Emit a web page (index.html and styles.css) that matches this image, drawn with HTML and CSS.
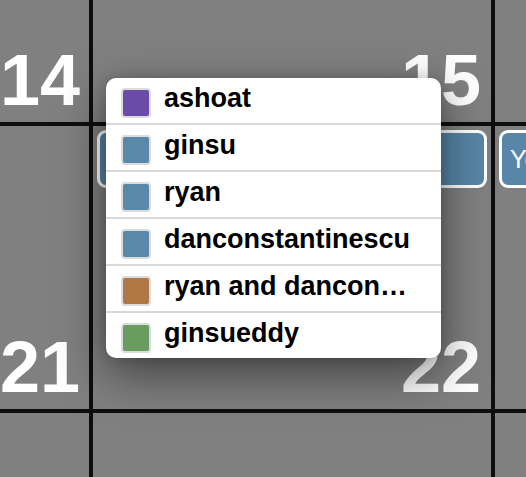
FILE: index.html
```html
<!DOCTYPE html>
<html>
<head>
<meta charset="utf-8">
<link rel="stylesheet" href="styles.css">
</head>
<body>
<div class="calendar">
  <div class="cell"><span class="day">14</span></div>
  <div class="cell"><span class="day">15</span></div>
  <div class="cell"></div>
  <div class="cell"><span class="day">21</span></div>
  <div class="cell">
    <div class="event"></div>
    <span class="day">22</span>
  </div>
  <div class="cell">
    <div class="event"><span class="event-label">Yo</span></div>
  </div>
  <div class="cell"></div>
  <div class="cell"></div>
  <div class="cell"></div>
</div>

<div class="popup">
  <div class="row"><span class="swatch purple"></span><span class="name">ashoat</span></div>
  <div class="row"><span class="swatch blue"></span><span class="name">ginsu</span></div>
  <div class="row"><span class="swatch blue"></span><span class="name">ryan</span></div>
  <div class="row"><span class="swatch blue"></span><span class="name">danconstantinescu</span></div>
  <div class="row"><span class="swatch brown"></span><span class="name">ryan and dancon…</span></div>
  <div class="row"><span class="swatch green"></span><span class="name">ginsueddy</span></div>
</div>
</body>
</html>
```
FILE: styles.css
```css
html, body {
  margin: 0;
  padding: 0;
}
body {
  width: 526px;
  height: 477px;
  overflow: hidden;
  background: #808080;
  position: relative;
  font-family: "Liberation Sans", Arial, sans-serif;
}
.calendar {
  display: grid;
  grid-template-columns: 89px 398px 398px;
  grid-template-rows: 122px 283px 283px;
  gap: 4px;
  background: #0e0e0e;
  width: 893px;
}
.cell {
  background: #808080;
  display: flex;
  flex-direction: column;
  justify-content: flex-end;
  align-items: stretch;
  overflow: hidden;
}
.day {
  color: #fff;
  font-weight: bold;
  font-size: 72px;
  line-height: 72px;
  text-align: right;
  padding: 0 10px 6px 0;
  white-space: nowrap;
}
.event {
  margin: 4px 4px auto 4px;
  height: 52px;
  border: 3px solid #fff;
  border-radius: 9px;
  background: #5886a8;
  display: flex;
  align-items: center;
  padding: 0 8px;
}
.event-label {
  color: #fff;
  font-size: 25px;
}
.popup {
  position: absolute;
  left: 106px;
  top: 78px;
  width: 335px;
  background: #fff;
  border-radius: 10px;
  box-shadow: 0 16px 48px rgba(0, 0, 0, 0.5), 0 0 12px rgba(0, 0, 0, 0.15);
  overflow: hidden;
}
.row {
  display: flex;
  align-items: flex-start;
  height: 45px;
  padding-left: 15px;
  padding-right: 20px;
  border-bottom: 2px solid #d9d9d9;
}
.row:last-child {
  border-bottom: none;
}
.swatch {
  flex: none;
  width: 26px;
  height: 26px;
  margin-top: 10px;
  border: 2px solid #dcdcdc;
  border-radius: 4px;
}
.purple { background: #6b4ba8; }
.blue { background: #5a88a9; }
.brown { background: #b07844; }
.green { background: #699d60; }
.name {
  margin-left: 13px;
  margin-top: 4px;
  font-size: 27px;
  line-height: 32px;
  font-weight: bold;
  color: #000;
  white-space: nowrap;
  overflow: hidden;
  text-overflow: ellipsis;
}
```
